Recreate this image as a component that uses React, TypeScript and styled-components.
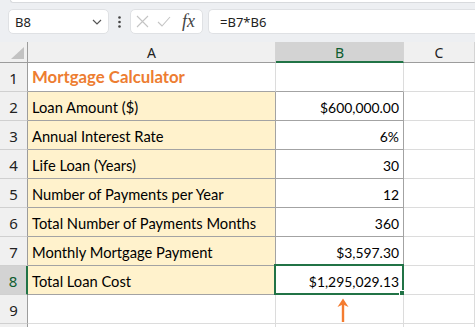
import React from "react";
import styled, { createGlobalStyle } from "styled-components";

const Global = createGlobalStyle`
  html, body { margin: 0; padding: 0; }
  body { background: #edeff2; font-family: "Noto Sans", sans-serif; }
`;

const Page = styled.div`
  width: 475px;
  height: 327px;
  overflow: hidden;
  background: #edeff2;
`;

const RibbonEdge = styled.div`
  height: 2px;
  margin-left: 10px;
  background: #fff;
  border-bottom: 1px solid #d8dadd;
  border-left: 1px solid #d8dadd;
  border-bottom-left-radius: 6px;
`;

const FormulaBar = styled.div`
  height: 39px;
  box-sizing: border-box;
  display: flex;
  align-items: flex-start;
  padding: 6px 0 0 8px;
`;

const Box = styled.div<{ $w?: number }>`
  height: 25px;
  box-sizing: border-box;
  background: #fff;
  border: 1px solid #dfe1e4;
  border-radius: 5px;
  display: flex;
  align-items: center;
  ${(p) => (p.$w ? `width: ${p.$w}px;` : "flex: 1; border-right: none; border-radius: 5px 0 0 5px;")}
`;

const NameBox = styled(Box)`
  padding: 0 6px 0 6px;
  justify-content: space-between;
  font-size: 13px;
  color: #222;
`;

const Dots = styled.div`
  width: 21px;
  height: 25px;
  display: flex;
  align-items: center;
  justify-content: center;
`;

const FxBox = styled(Box)`
  margin-right: 5px;
  padding: 0 4px 0 5px;
  gap: 8px;
`;

const Fx = styled.span`
  font-family: "Liberation Serif", serif;
  font-style: italic;
  font-size: 18px;
  color: #444;
  margin-left: 3px;
  line-height: 1;
  margin-top: -2px;
`;

const FormulaInput = styled(Box)`
  padding-left: 11px;
  font-size: 13px;
  color: #222;
`;

const Sheet = styled.div`
  display: grid;
  grid-template-columns: 28px 248px 128px 71px;
  grid-template-rows: 21px repeat(9, 29px) 20px;
`;

const Corner = styled.div`
  background: #f0f0f0;
  border-right: 1px solid #9c9c9c;
  border-bottom: 1px solid #9c9c9c;
  display: flex;
  align-items: flex-end;
  justify-content: flex-end;
  padding: 0 3px 3px 0;
`;

const ColHead = styled.div<{ $sel?: boolean }>`
  background: ${(p) => (p.$sel ? "#d3d3d3" : "#f0f0f0")};
  border-right: 1px solid #d4d4d4;
  border-bottom: ${(p) => (p.$sel ? "2px solid #217346" : "1px solid #9c9c9c")};
  display: flex;
  align-items: center;
  justify-content: center;
  font-size: 14px;
  color: ${(p) => (p.$sel ? "#0e5c2f" : "#222")};
  padding-top: ${(p) => (p.$sel ? "1px" : "0")};
`;

const RowHead = styled.div<{ $sel?: boolean }>`
  background: ${(p) => (p.$sel ? "#d3d3d3" : "#f0f0f0")};
  border-right: ${(p) => (p.$sel ? "2px solid #217346" : "1px solid #9c9c9c")};
  border-bottom: 1px solid #d0d0d0;
  display: flex;
  align-items: center;
  justify-content: center;
  font-size: 15px;
  color: ${(p) => (p.$sel ? "#0e5c2f" : "#222")};
  padding-top: 2px;
  box-sizing: border-box;
`;

const Cell = styled.div<{
  $fill?: boolean;
  $right?: boolean;
  $dark?: "all" | "bottom" | "none";
}>`
  position: relative;
  box-sizing: border-box;
  background: ${(p) => (p.$fill ? "#fff2cc" : "#fff")};
  border-right: 1px solid ${(p) => (p.$dark === "all" ? "#a3a3a3" : "#dcdcdc")};
  border-bottom: 1px solid ${(p) => (p.$dark && p.$dark !== "none" ? "#a3a3a3" : "#dcdcdc")};
  display: flex;
  align-items: flex-end;
  justify-content: ${(p) => (p.$right ? "flex-end" : "flex-start")};
  padding: 0 4px 4px 4px;
  font-family: Lato, "Liberation Sans", sans-serif;
  font-size: ${(p) => (p.$right ? "13.9px" : "14.7px")};
  color: #000;
  white-space: nowrap;
`;

const Title = styled.span`
  font-weight: bold;
  color: #ed7d31;
  font-size: 16.8px;
`;

const Selection = styled.div`
  position: absolute;
  left: -2px;
  top: -2px;
  right: -1px;
  bottom: -1px;
  border: 2px solid #217346;
  pointer-events: none;
`;

const Handle = styled.div`
  position: absolute;
  right: -5px;
  bottom: -5px;
  width: 6px;
  height: 6px;
  background: #217346;
  border: 1px solid #fff;
`;

const ArrowCell = styled(Cell)`
  justify-content: center;
  align-items: flex-start;
  padding: 3px 0 0 6px;
`;

type Row = { label: string; value: string };

const rows: Row[] = [
  { label: "Loan Amount ($)", value: "$600,000.00" },
  { label: "Annual Interest Rate", value: "6%" },
  { label: "Life Loan (Years)", value: "30" },
  { label: "Number of Payments per Year", value: "12" },
  { label: "Total Number of Payments Months", value: "360" },
  { label: "Monthly Mortgage Payment", value: "$3,597.30" },
  { label: "Total Loan Cost", value: "$1,295,029.13" },
];

export default function App() {
  return (
    <Page>
      <Global />
      <RibbonEdge />
      <FormulaBar>
        <NameBox $w={101}>
          <span>B8</span>
          <svg width="10" height="6" viewBox="0 0 10 6">
            <path d="M1 1 L5 5 L9 1" fill="none" stroke="#555" strokeWidth="1.2" />
          </svg>
        </NameBox>
        <Dots>
          <svg width="3" height="12" viewBox="0 0 3 12">
            <circle cx="1.5" cy="1.5" r="1.3" fill="#444" />
            <circle cx="1.5" cy="6" r="1.3" fill="#444" />
            <circle cx="1.5" cy="10.5" r="1.3" fill="#444" />
          </svg>
        </Dots>
        <FxBox $w={73}>
          <svg width="13" height="13" viewBox="0 0 13 13">
            <path d="M1 1 L12 12 M12 1 L1 12" stroke="#c4c4c4" strokeWidth="1.1" fill="none" />
          </svg>
          <svg width="14" height="11" viewBox="0 0 14 11">
            <path d="M1 6 L5 10 L13 1" stroke="#c4c4c4" strokeWidth="1.1" fill="none" />
          </svg>
          <Fx>fx</Fx>
        </FxBox>
        <FormulaInput>=B7*B6</FormulaInput>
      </FormulaBar>
      <Sheet>
        <Corner>
          <svg width="13" height="12" viewBox="0 0 13 12">
            <path d="M13 0 L13 12 L0 12 Z" fill="#c2c2c2" />
          </svg>
        </Corner>
        <ColHead>A</ColHead>
        <ColHead $sel>B</ColHead>
        <ColHead>C</ColHead>

        <RowHead>1</RowHead>
        <Cell $dark="bottom">
          <Title>Mortgage Calculator</Title>
        </Cell>
        <Cell $dark="bottom" />
        <Cell />

        {rows.map((r, i) => {
          const n = i + 2;
          const sel = n === 8;
          return (
            <React.Fragment key={n}>
              <RowHead $sel={sel}>{n}</RowHead>
              <Cell $fill $dark="all">
                {r.label}
              </Cell>
              <Cell $right $dark="all">
                {r.value}
                {sel && (
                  <Selection>
                    <Handle />
                  </Selection>
                )}
              </Cell>
              <Cell />
            </React.Fragment>
          );
        })}

        <RowHead>9</RowHead>
        <Cell />
        <ArrowCell>
          <svg width="12" height="25" viewBox="0 0 12 25">
            <path d="M6 24 L6 4" stroke="#f47c30" strokeWidth="2.4" fill="none" />
            <path d="M0.5 9 L6 0.5 L11.5 9 L6 6.5 Z" fill="#f47c30" />
          </svg>
        </ArrowCell>
        <Cell />

        <RowHead />
        <Cell />
        <Cell />
        <Cell />
      </Sheet>
    </Page>
  );
}
